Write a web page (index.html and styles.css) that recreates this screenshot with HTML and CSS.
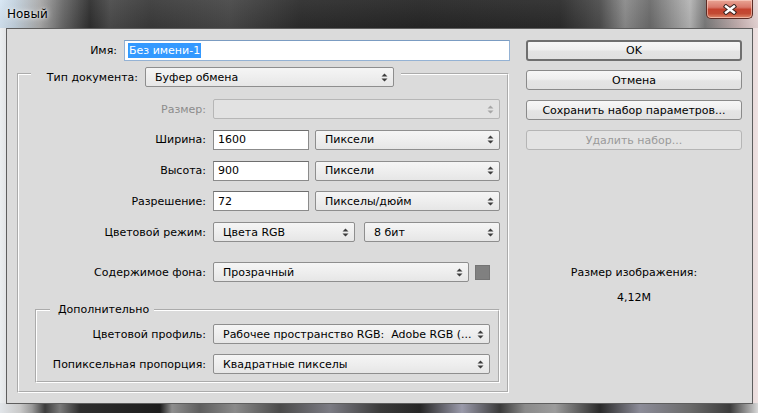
FILE: index.html
```html
<!DOCTYPE html>
<html lang="ru">
<head>
<meta charset="utf-8">
<title>Новый</title>
<link rel="stylesheet" href="styles.css">
</head>
<body>
<div class="window">
  <div class="titlebar">
    <span class="title">Новый</span>
    <div class="close-btn">
      <svg width="14" height="11" viewBox="0 0 14 11"><path class="x-outline" d="M3 2.5 L11 8.5 M11 2.5 L3 8.5"/><path class="x-fill" d="M3 2.5 L11 8.5 M11 2.5 L3 8.5"/></svg>
    </div>
  </div>
  <div class="client">
    <div class="form-col">
      <div class="name-row">
        <span class="lbl name-lbl">Имя:</span>
        <div class="field field-name"><span class="selected-text">Без имени-1</span></div>
      </div>

      <fieldset class="group group-main">
        <legend class="legend-main">
          <div class="legend-inner">
            <span class="lbl doc-lbl">Тип документа:</span>
            <div class="select sel-doc"><span class="val">Буфер обмена</span><svg class="arrows" width="7" height="9" viewBox="0 0 7 9"><path d="M0.5 3.5 L3.5 0.5 L6.5 3.5Z M0.5 5.5 L3.5 8.5 L6.5 5.5Z"/></svg></div>
          </div>
        </legend>

        <div class="rows-main">
          <div class="row">
            <span class="lbl lbl-main is-disabled">Размер:</span>
            <div class="select sel-size is-disabled"><span class="val"></span><svg class="arrows" width="7" height="9" viewBox="0 0 7 9"><path d="M0.5 3.5 L3.5 0.5 L6.5 3.5Z M0.5 5.5 L3.5 8.5 L6.5 5.5Z"/></svg></div>
          </div>
          <div class="row">
            <span class="lbl lbl-main">Ширина:</span>
            <div class="field field-num">1600</div>
            <div class="select sel-unit"><span class="val">Пиксели</span><svg class="arrows" width="7" height="9" viewBox="0 0 7 9"><path d="M0.5 3.5 L3.5 0.5 L6.5 3.5Z M0.5 5.5 L3.5 8.5 L6.5 5.5Z"/></svg></div>
          </div>
          <div class="row">
            <span class="lbl lbl-main">Высота:</span>
            <div class="field field-num">900</div>
            <div class="select sel-unit"><span class="val">Пиксели</span><svg class="arrows" width="7" height="9" viewBox="0 0 7 9"><path d="M0.5 3.5 L3.5 0.5 L6.5 3.5Z M0.5 5.5 L3.5 8.5 L6.5 5.5Z"/></svg></div>
          </div>
          <div class="row">
            <span class="lbl lbl-main">Разрешение:</span>
            <div class="field field-num">72</div>
            <div class="select sel-unit"><span class="val">Пикселы/дюйм</span><svg class="arrows" width="7" height="9" viewBox="0 0 7 9"><path d="M0.5 3.5 L3.5 0.5 L6.5 3.5Z M0.5 5.5 L3.5 8.5 L6.5 5.5Z"/></svg></div>
          </div>
          <div class="row">
            <span class="lbl lbl-main">Цветовой режим:</span>
            <div class="select sel-mode"><span class="val">Цвета RGB</span><svg class="arrows" width="7" height="9" viewBox="0 0 7 9"><path d="M0.5 3.5 L3.5 0.5 L6.5 3.5Z M0.5 5.5 L3.5 8.5 L6.5 5.5Z"/></svg></div>
            <div class="select sel-bits"><span class="val">8 бит</span><svg class="arrows" width="7" height="9" viewBox="0 0 7 9"><path d="M0.5 3.5 L3.5 0.5 L6.5 3.5Z M0.5 5.5 L3.5 8.5 L6.5 5.5Z"/></svg></div>
          </div>
        </div>

        <div class="row row-bg">
          <span class="lbl lbl-main">Содержимое фона:</span>
          <div class="select sel-bg"><span class="val">Прозрачный</span><svg class="arrows" width="7" height="9" viewBox="0 0 7 9"><path d="M0.5 3.5 L3.5 0.5 L6.5 3.5Z M0.5 5.5 L3.5 8.5 L6.5 5.5Z"/></svg></div>
          <div class="swatch"></div>
        </div>

        <fieldset class="group group-sub">
          <legend class="legend-sub">Дополнительно</legend>
          <div class="rows-sub">
            <div class="row">
              <span class="lbl lbl-sub">Цветовой профиль:</span>
              <div class="select sel-sub"><span class="val">Рабочее пространство RGB:&nbsp; Adobe RGB (...</span><svg class="arrows" width="7" height="9" viewBox="0 0 7 9"><path d="M0.5 3.5 L3.5 0.5 L6.5 3.5Z M0.5 5.5 L3.5 8.5 L6.5 5.5Z"/></svg></div>
            </div>
            <div class="row">
              <span class="lbl lbl-sub">Попиксельная пропорция:</span>
              <div class="select sel-sub"><span class="val">Квадратные пикселы</span><svg class="arrows" width="7" height="9" viewBox="0 0 7 9"><path d="M0.5 3.5 L3.5 0.5 L6.5 3.5Z M0.5 5.5 L3.5 8.5 L6.5 5.5Z"/></svg></div>
            </div>
          </div>
        </fieldset>
      </fieldset>
    </div>

    <div class="button-col">
      <div class="btn btn-default">OK</div>
      <div class="btn">Отмена</div>
      <div class="btn">Сохранить набор параметров...</div>
      <div class="btn is-disabled">Удалить набор...</div>
      <div class="info">
        <div class="info-title">Размер изображения:</div>
        <div class="info-value">4,12M</div>
      </div>
    </div>
  </div>
</div>
</body>
</html>
```

FILE: styles.css
```css
* { box-sizing: border-box; }

html, body {
  margin: 0;
  padding: 0;
}

body {
  width: 758px;
  height: 413px;
  overflow: hidden;
  font-family: "DejaVu Sans", "Liberation Sans", sans-serif;
  font-size: 11px;
  line-height: 13px;
  color: #000;
  background: #2a2a2a;
}

/* ---------- window frame (Aero glass) ---------- */
.window {
  width: 758px;
  height: 413px;
  display: flex;
  flex-direction: column;
  background:
    linear-gradient(90deg, #e2e6ea 0, #c9c9c9 20px, #9a9a9a 32px, #3c3c3c 45px, #7a7a7a 60px, #2e2e2e 80px, #1d1d1d 160px, #8e8e8e 172px, #5e5e5e 200px, #8a8a8a 235px, #4a4a4a 280px, #7c7c84 330px, #3a3a3a 380px, #262626 420px, #9a9aaa 462px, #3a3a3a 500px, #8a8a8a 525px, #9c9c9c 555px, #2a2a2a 600px, #8c8c98 640px, #6a6a6a 690px, #3c3c3c 730px, #a8a8a8 750px, #d8d8d8 758px) left bottom / 100% 10px no-repeat,
    linear-gradient(180deg, rgba(255,255,255,0.06), rgba(0,0,0,0.05)) left top / 100% 28px no-repeat,
    linear-gradient(90deg, #d6e6f4 0, #c4d3e0 14px, #a9a9a9 40px, #6a6a6a 62px, #2e2e2e 90px, #4a4a4a 110px, #3a3a3a 150px, #474747 230px, #2c2c2c 300px, #262626 420px, #2b2b2b 560px, #4c4c4c 600px, #8a8a8a 625px, #6a6a6a 650px, #b4b4b4 690px, #7a7a7a 705px, #c9b4b4 740px, #ead8d8 758px) left top / 100% 28px no-repeat,
    linear-gradient(90deg, #eceff1 0, #e2e4e6 6px, #9a9a9a 50%, #e8dada 752px, #efe2e2 758px);
}

.titlebar {
  height: 28px;
  flex: none;
  display: flex;
  justify-content: space-between;
  align-items: flex-start;
  padding-left: 7px;
}

.title {
  font-size: 12px;
  line-height: 28px;
  color: #000;
  text-shadow: 0 0 6px rgba(255,255,255,0.9), 0 0 3px rgba(255,255,255,0.8);
}

.close-btn {
  width: 47px;
  height: 19px;
  margin-right: 5px;
  border: 1px solid #5b2c25;
  border-top: none;
  border-radius: 0 0 5px 5px;
  background: linear-gradient(180deg, #e9a595 0, #d9786a 40%, #c4432f 52%, #c24a33 75%, #de8a6c 100%);
  box-shadow: inset 0 0 0 1px rgba(255,220,210,0.55);
  display: flex;
  align-items: center;
  justify-content: center;
}

.x-outline { stroke: #3b2420; stroke-width: 4.4; stroke-linecap: square; fill: none; }
.x-fill { stroke: #ffffff; stroke-width: 2.4; stroke-linecap: square; fill: none; }

/* ---------- client area ---------- */
.client {
  height: 376px;
  flex: none;
  margin: 0 5px 0 6px;
  border: 1px solid #5e5e5e;
  background: #dbdbdb;
  display: flex;
  gap: 17px;
}

.form-col {
  width: 502px;
  padding: 11px 0 0 10px;
  flex: none;
}

.button-col {
  width: 216px;
  padding-top: 11px;
  flex: none;
  display: flex;
  flex-direction: column;
}

.lbl {
  white-space: nowrap;
  text-align: right;
  flex: none;
}

.is-disabled { color: #8c8c8c; }

/* name row */
.name-row {
  display: flex;
  align-items: center;
  gap: 7px;
  width: 493px;
}
.name-lbl { width: 100px; }

/* text fields */
.field {
  height: 20px;
  background: #fff;
  border: 1px solid #8b8b8b;
  border-top-color: #6e6e6e;
  display: flex;
  align-items: center;
  padding-left: 4px;
  flex: none;
  white-space: nowrap;
}
.field-name {
  width: 386px;
  height: 21px;
  border-color: #94b2d4;
  border-top-color: #7b9cc2;
  padding-left: 3px;
}
.selected-text {
  background: #3399ff;
  color: #fff;
  line-height: 15px;
  padding: 0 1px;
}
.field-num { width: 96px; }

/* selects */
.select {
  height: 20px;
  border: 1px solid #8e8e8e;
  border-radius: 2px;
  background: linear-gradient(180deg, #f5f5f5 0, #eeeeee 50%, #e6e6e6 100%);
  display: flex;
  align-items: center;
  justify-content: space-between;
  padding: 0 5px 0 9px;
  flex: none;
  white-space: nowrap;
  overflow: hidden;
}
.select .val { overflow: hidden; }
.arrows { flex: none; fill: #3c3c3c; }
.select.is-disabled {
  border-color: #b6b6b6;
  background: #e2e2e2;
}
.select.is-disabled .arrows { fill: #a6a6a6; }

.sel-doc { width: 249px; }
.sel-size { width: 287px; }
.sel-unit { width: 185px; }
.sel-mode { width: 142px; }
.sel-bits { width: 136px; }
.sel-bg { width: 256px; }
.sel-sub { width: 277px; }

.swatch {
  width: 15px;
  height: 15px;
  background: #808080;
  border: 1px solid #747474;
  flex: none;
}

/* group boxes */
.group {
  margin: 0;
  padding: 0;
  min-width: 0;
  border: 2px groove #ffffff;
}

.group-main {
  width: 492px;
}

.legend-main {
  margin-left: 12px;
  padding: 6px 7px 0 0;
}
.legend-inner {
  display: flex;
  align-items: center;
  gap: 7px;
}
.doc-lbl { width: 107px; }

.rows-main {
  padding-top: 12px;
  display: flex;
  flex-direction: column;
  gap: 10.75px;
}

.row {
  display: flex;
  align-items: center;
  height: 20px;
}

.lbl-main { width: 187px; margin-right: 7px; }

.rows-main .row .field-num + .select { margin-left: 6px; }
.sel-mode + .sel-bits { margin-left: 9px; }

.row-bg { margin-top: 20px; }
.sel-bg + .swatch { margin-left: 6px; }

.group-sub {
  width: 465px;
  margin: 21px 0 8px 16px;
  padding-bottom: 7px;
}

.legend-sub {
  margin-left: 13px;
  padding: 0 5px 0 8px;
  line-height: 14px;
}

.rows-sub {
  padding-top: 7px;
  display: flex;
  flex-direction: column;
  gap: 10px;
}

.lbl-sub { width: 169px; margin-right: 7px; }

/* buttons */
.btn {
  height: 20px;
  border: 1px solid #8a8a8a;
  border-radius: 3px;
  background: linear-gradient(180deg, #f7f7f7 0, #efefef 45%, #e4e4e4 55%, #e1e1e1 100%);
  display: flex;
  align-items: center;
  justify-content: center;
  white-space: nowrap;
  margin-top: 10px;
}
.btn-default {
  height: 21px;
  margin-top: 0;
  margin-bottom: -1px;
  border: 2px solid #6f6f6f;
}
.btn.is-disabled {
  border-color: #b5b5b5;
  background: #e3e3e3;
  color: #9a9a9a;
}

.info {
  margin-top: 116px;
  text-align: center;
}
.info-value { margin-top: 12px; }
```
